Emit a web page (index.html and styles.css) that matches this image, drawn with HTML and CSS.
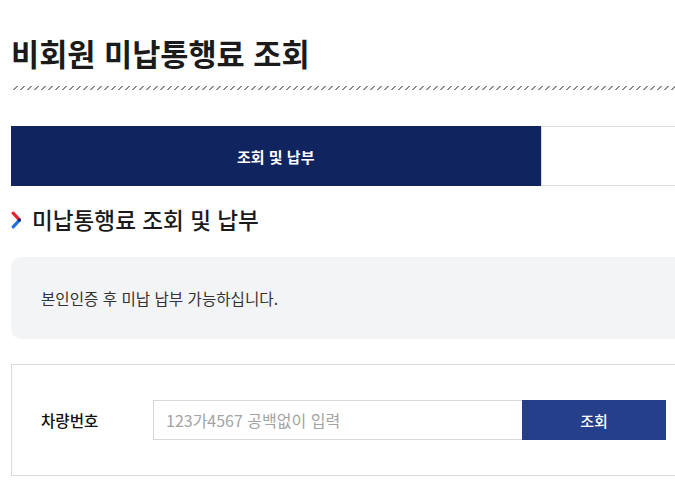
FILE: index.html
```html
<!DOCTYPE html>
<html lang="ko">
<head>
<meta charset="utf-8">
<title>비회원 미납통행료 조회</title>
<link rel="stylesheet" href="styles.css">
</head>
<body>
<div class="page">
  <h1 class="title">비회원 미납통행료 조회</h1>
  <div class="hatch"></div>
  <div class="tabs">
    <div class="tab active">조회 및 납부</div>
    <div class="tab"></div>
  </div>
  <h2 class="section">
    <svg class="chev" width="11" height="18" viewBox="0 0 11 18">
      <path d="M2.2 2.2 L8.2 8.6" stroke="#e8232f" stroke-width="3.2" stroke-linecap="round"/>
      <path d="M8.2 9.4 L2.2 15.8" stroke="#1f72db" stroke-width="3.2" stroke-linecap="round"/>
      <circle cx="8.4" cy="9" r="1.7" fill="#1d2a7a"/>
    </svg>
    <span>미납통행료 조회 및 납부</span>
  </h2>
  <div class="notice">본인인증 후 미납 납부 가능하십니다.</div>
  <div class="form">
    <label class="label" for="car">차량번호</label>
    <input id="car" class="input" type="text" placeholder="123가4567 공백없이 입력">
    <button class="btn" type="button">조회</button>
  </div>
</div>
</body>
</html>
```
FILE: styles.css
```css
html, body {
  margin: 0;
  padding: 0;
  background: #fff;
  overflow: hidden;
}
body {
  font-family: "Noto Sans CJK KR", "Noto Sans", sans-serif;
  color: #222;
}
.page {
  width: 1060px;
  padding-left: 11px;
}
.title {
  margin: 0;
  padding-top: 30px;
  font-size: 30.6px;
  line-height: 46px;
  font-weight: 700;
  color: #1b1b1b;
}
.hatch {
  margin-top: 10px;
  height: 4px;
  background: repeating-linear-gradient(135deg, transparent 0 3.9px, #8c8c8c 3.9px 4.95px);
}
.tabs {
  display: flex;
  margin-top: 36px;
  height: 60px;
}
.tab {
  flex: 1;
  display: flex;
  align-items: center;
  justify-content: center;
  border-top: 1px solid #dcdcdc;
  border-bottom: 1px solid #dcdcdc;
  border-left: 1px solid #dcdcdc;
  box-sizing: border-box;
  font-size: 15px;
  font-weight: 700;
}
.tab.active {
  background: #10245f;
  color: #fff;
  border: none;
}
.section {
  display: flex;
  align-items: center;
  gap: 10px;
  margin: 0;
  padding-top: 19px;
  font-size: 22.6px;
  line-height: 30px;
  font-weight: 500;
  color: #1b1b1b;
}
.chev {
  display: block;
  flex: none;
}
.notice {
  margin-top: 22px;
  height: 82px;
  display: flex;
  align-items: center;
  padding-left: 30px;
  background: #f3f4f6;
  border-radius: 10px;
  font-size: 15.6px;
  color: #333;
}
.form {
  margin-top: 25px;
  height: 112px;
  box-sizing: border-box;
  border: 1px solid #dcdcdc;
  display: flex;
  align-items: center;
  padding-left: 29px;
}
.label {
  width: 112px;
  font-size: 15.6px;
  font-weight: 500;
  color: #111;
}
.input {
  width: 369px;
  height: 40px;
  box-sizing: border-box;
  border: 1px solid #d9d9d9;
  border-right: none;
  padding: 0 12px;
  font-family: inherit;
  font-size: 16px;
  color: #333;
  outline: none;
}
.input::placeholder {
  color: #a3a3a3;
}
.btn {
  width: 144px;
  height: 40px;
  border: none;
  background: #253f8a;
  color: #fff;
  font-family: inherit;
  font-size: 15px;
  font-weight: 500;
  cursor: pointer;
}
```
